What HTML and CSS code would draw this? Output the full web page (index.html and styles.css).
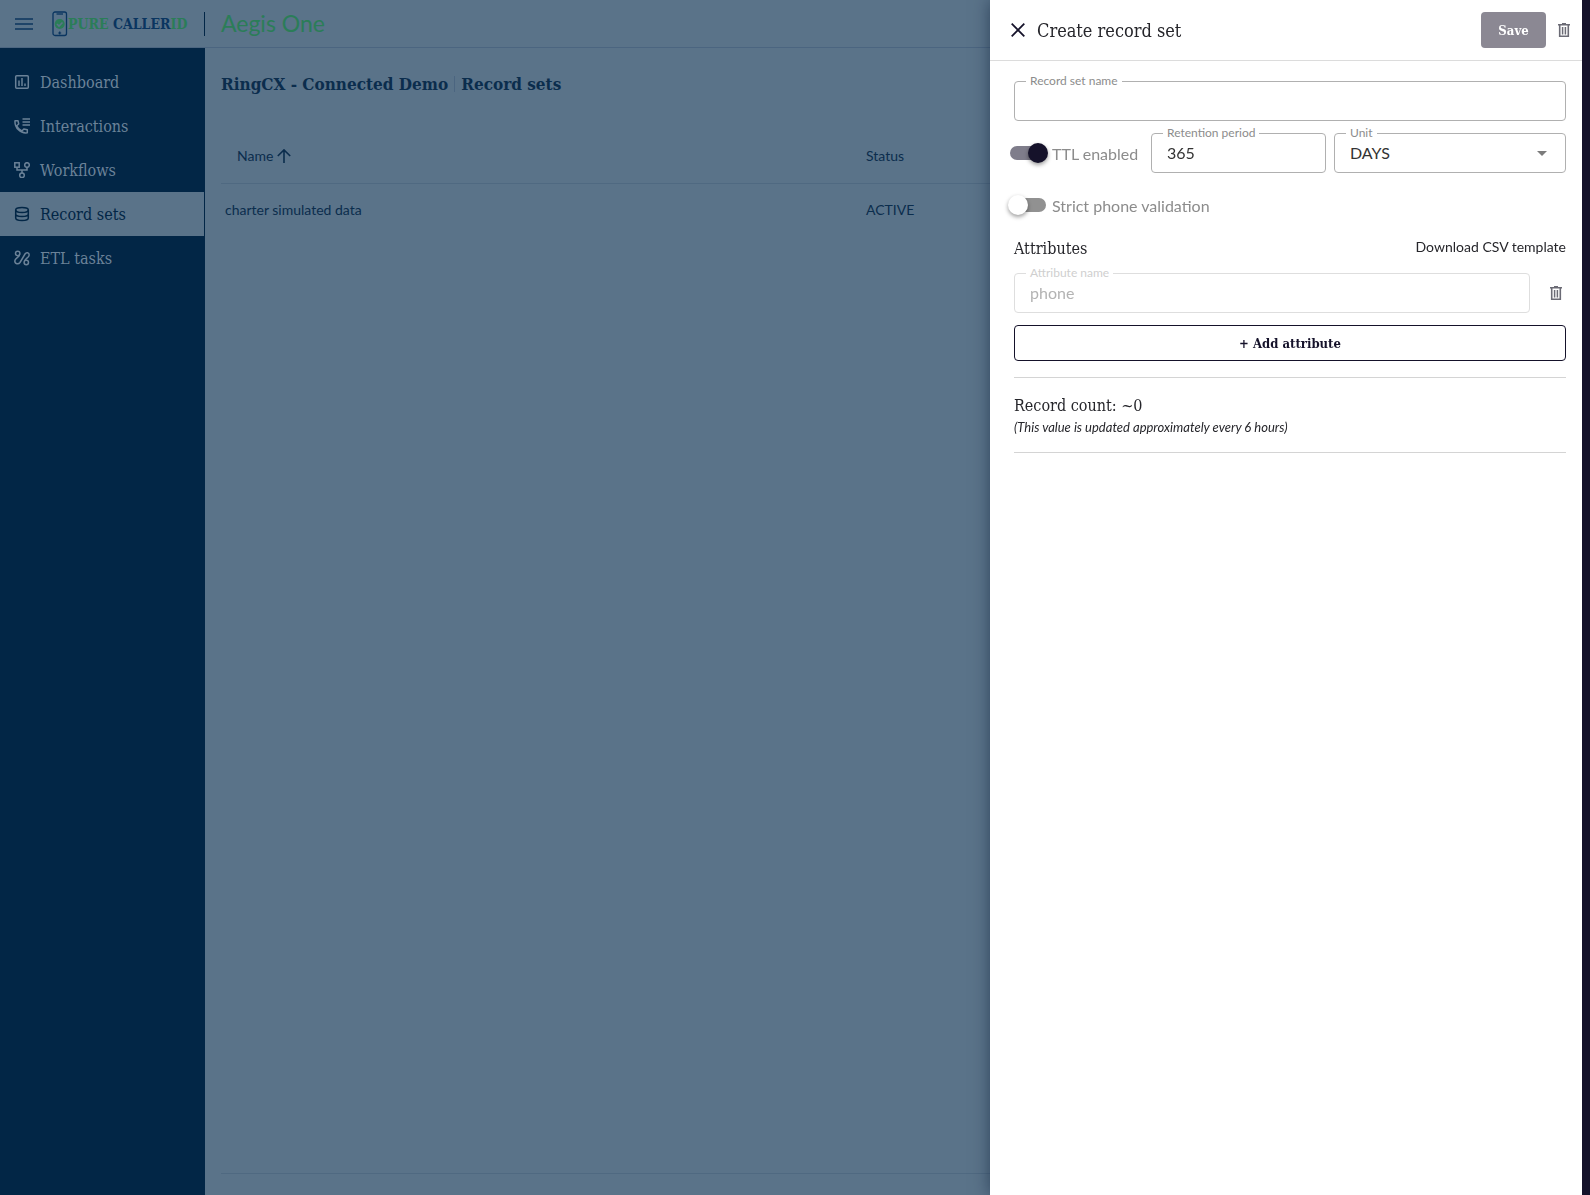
FILE: index.html
```html
<!DOCTYPE html>
<html lang="en">
<head>
    <meta charset="UTF-8">
    <meta name="viewport" content="width=device-width, initial-scale=1.0">
    <title>Aegis One - Record sets</title>
    <link rel="stylesheet" href="styles.css">
</head>
<body>
    <div class="app">
        <header class="topbar">
            <button class="icon-btn menu-btn" aria-label="Menu">
                <svg width="18" height="12" viewBox="0 0 18 12"><path d="M0 0h18v2H0zM0 5h18v2H0zM0 10h18v2H0z" fill="currentColor"/></svg>
            </button>
            <a class="logo" href="#">
                <svg width="16" height="26" viewBox="0 0 16 26">
                    <rect x="1" y="1" width="13.500" height="23.500" rx="2" fill="none" stroke="#0a3560" stroke-width="1.300"/>
                    <path d="M4.500 3h6.500" stroke="#0a3560" stroke-width="1.300"/>
                    <path d="M6.200 22h3M7.700 20.500v3" stroke="#0a3560" stroke-width="1.200"/>
                    <circle cx="7.700" cy="13" r="5" fill="#2b7d58"/>
                    <path d="M5 13l2 2 3.500-3.500" fill="none" stroke="#5a7389" stroke-width="1.600"/>
                </svg>
                <span class="logo-text"><span class="green">PURE</span> CALLER<span class="green">ID</span></span>
            </a>
            <span class="product">Aegis One</span>
        </header>
        <div class="body">
            <nav class="sidebar">
                <a class="nav-item" href="#">
                    <svg width="16" height="16" viewBox="0 0 16 16"><g fill="none" stroke="currentColor" stroke-width="1.500"><rect x="1.700" y="1.700" width="12.600" height="12.600" rx="1"/><path d="M5 6.500v5.500M8 4v8M11 9.500v2.500"/></g></svg>
                    Dashboard
                </a>
                <a class="nav-item" href="#">
                    <svg width="16" height="16" viewBox="0 0 16 16"><path d="M8.500 1h7.500M8.500 4h7.500M8.500 7h7.500" stroke="currentColor" stroke-width="1.500"/><path d="M1 2.700h3l.7 3.300-2 1.700c1 2.300 2.800 4.200 5.200 5.300l1.900-2 3.500.8v3C6.500 15.800.5 9.800 1 2.700z" fill="none" stroke="currentColor" stroke-width="1.500" stroke-linejoin="round"/></svg>
                    Interactions
                </a>
                <a class="nav-item" href="#">
                    <svg width="16" height="16" viewBox="0 0 16 16"><g fill="none" stroke="currentColor" stroke-width="1.500"><rect x=".8" y=".8" width="4.400" height="4.400"/><circle cx="13" cy="3" r="2.300"/><circle cx="8" cy="13.300" r="2.300"/><path d="M3 5v3h10V5M8 8v3"/></g></svg>
                    Workflows
                </a>
                <a class="nav-item active" href="#">
                    <svg width="16" height="16" viewBox="0 0 16 16"><g fill="none" stroke="currentColor" stroke-width="1.500"><ellipse cx="8" cy="4" rx="6.300" ry="2.500"/><path d="M1.700 4v8c0 1.400 2.800 2.500 6.300 2.500s6.300-1.100 6.300-2.500V4M1.700 8c0 1.400 2.800 2.500 6.300 2.500s6.300-1.100 6.300-2.500"/></g></svg>
                    Record sets
                </a>
                <a class="nav-item" href="#">
                    <svg width="16" height="16" viewBox="0 0 16 16"><g fill="none" stroke="currentColor" stroke-width="1.500"><circle cx="3.700" cy="3.500" r="2.200"/><circle cx="12.300" cy="12.500" r="2.200"/><path d="M5.500 4.800C5.500 7.500.8 8 .8 11c0 3.200 3.600 3.700 5.200 1.500l5-8.500c1.300-2 4.200-1.500 4.200 1 0 2.700-4.200 3.500-4.400 6"/></g></svg>
                    ETL tasks
                </a>
            </nav>
            <main class="content">
                <h1 class="page-title"><span>RingCX - Connected Demo</span><span class="title-sep"></span><span>Record sets</span></h1>
                <table class="records">
                    <thead>
                        <tr>
                            <th class="col-name">Name <svg width="14" height="14" viewBox="0 0 14 14"><path d="M7 14V1M.8 7L7 .9 13.200 7" fill="none" stroke="currentColor" stroke-width="1.600"/></svg></th>
                            <th>Status</th>
                        </tr>
                    </thead>
                    <tbody>
                        <tr>
                            <td>charter simulated data</td>
                            <td>ACTIVE</td>
                        </tr>
                    </tbody>
                </table>
                <footer class="table-footer"></footer>
            </main>
        </div>
    </div>

    <form class="drawer">
        <div class="drawer-header">
            <button type="button" class="icon-btn close-btn" aria-label="Close">
                <svg width="14" height="14" viewBox="0 0 14 14"><path d="M.7.7l12.600 12.600M13.300.7L.7 13.300" stroke="currentColor" stroke-width="1.800"/></svg>
            </button>
            <h2 class="drawer-title">Create record set</h2>
            <button class="save-btn" disabled>Save</button>
            <button type="button" class="icon-btn" aria-label="Delete record set">
                <svg width="12" height="15" viewBox="0 0 12 15"><path d="M0 1.700h12M4 .7h4" stroke="currentColor" stroke-width="1.400"/><path d="M1.700 2v11.300h8.600V2" fill="none" stroke="currentColor" stroke-width="1.600"/><path d="M4.600 4v7.500M7.400 4v7.500" stroke="currentColor" stroke-width="1.500"/></svg>
            </button>
        </div>
        <div class="drawer-body">
            <div class="field">
                <label for="setName">Record set name</label>
                <input type="text" id="setName">
            </div>
            <div class="row">
                <label class="switch"><input type="checkbox" checked>TTL enabled</label>
                <div class="field period">
                    <label for="period">Retention period</label>
                    <input type="text" id="period" value="365">
                </div>
                <div class="field unit">
                    <label for="unit">Unit</label>
                    <select id="unit">
                        <option>DAYS</option>
                    </select>
                    <svg class="caret" width="10" height="5" viewBox="0 0 10 5"><path d="M0 0h10L5 5z" fill="currentColor"/></svg>
                </div>
            </div>
            <div class="row">
                <label class="switch"><input type="checkbox">Strict phone validation</label>
            </div>
            <div class="section-head">
                <h3>Attributes</h3>
                <a href="#">Download CSV template</a>
            </div>
            <div class="row attribute">
                <div class="field disabled">
                    <label for="attrName">Attribute name</label>
                    <input type="text" id="attrName" value="phone" disabled>
                </div>
                <button type="button" class="icon-btn" aria-label="Delete attribute">
                    <svg width="12" height="15" viewBox="0 0 12 15"><path d="M0 1.700h12M4 .7h4" stroke="currentColor" stroke-width="1.400"/><path d="M1.700 2v11.300h8.600V2" fill="none" stroke="currentColor" stroke-width="1.600"/><path d="M4.600 4v7.500M7.400 4v7.500" stroke="currentColor" stroke-width="1.500"/></svg>
                </button>
            </div>
            <button type="button" class="add-btn">+ Add attribute</button>
            <div class="count">
                <h3>Record count: ~0</h3>
                <p>(This value is updated approximately every 6 hours)</p>
            </div>
        </div>
    </form>
</body>
</html>
```
FILE: styles.css
```css
* {
    box-sizing: border-box;
}
body {
    margin: 0;
    font-family: Lato, sans-serif;
    font-size: 14px;
    color: #0b2d4d;
    background: #5a7389;
}
h1, h2, h3, p {
    margin: 0;
    font-weight: normal;
}
a {
    color: inherit;
    text-decoration: none;
}
svg {
    display: block;
    flex: none;
}
.app {
    display: flex;
    flex-direction: column;
    height: 100vh;
    overflow: hidden;
}
.icon-btn {
    display: flex;
    padding: 0;
    border: none;
    background: none;
    color: #6b6b75;
    cursor: pointer;
}

/* top bar */
.topbar {
    display: flex;
    align-items: center;
    height: 48px;
    padding-left: 15px;
    border-bottom: 1px solid #4b6580;
}
.menu-btn {
    color: #1f4468;
}
.logo {
    display: flex;
    align-items: center;
    width: 153px;
    height: 24px;
    margin-left: 19px;
    border-right: 1px solid #022646;
    white-space: nowrap;
}
.logo-text {
    font: bold 14px "DejaVu Serif Condensed", "DejaVu Serif", serif;
    color: #0a3560;
}
.green, .product {
    color: #2b7d58;
}
.product {
    margin-left: 16px;
    font-size: 23px;
    line-height: 24px;
    padding-bottom: 2px;
}

/* side menu */
.body {
    display: flex;
    flex: 1;
}
.sidebar {
    width: 205px;
    padding: 12px 1px 0 0;
    background: #022646;
}
.nav-item {
    display: flex;
    align-items: center;
    gap: 10px;
    height: 44px;
    padding-left: 14px;
    font: 16px "DejaVu Serif Condensed", "DejaVu Serif", serif;
    color: #6b8298;
}
.nav-item.active {
    background: #5a7389;
    color: #022646;
}

/* records */
.content {
    display: flex;
    flex-direction: column;
    flex: 1;
    padding-left: 16px;
}
.page-title {
    display: flex;
    align-items: center;
    height: 72px;
    font: bold 17px "DejaVu Serif Condensed", "DejaVu Serif", serif;
}
.title-sep {
    width: 1px;
    height: 16px;
    margin: 0 6px;
    background: #4b6580;
}
.records {
    width: 100%;
    margin-top: 8px;
    border-collapse: collapse;
    table-layout: fixed;
}
.records th {
    height: 55px;
    padding: 0;
    border-bottom: 1px solid #4f6981;
    text-align: left;
    font-weight: normal;
}
.records th svg {
    display: inline-block;
    vertical-align: -2px;
}
.records .col-name {
    width: 645px;
    padding-left: 16px;
}
.records td {
    height: 52px;
    padding: 0;
}
.records td:first-child {
    padding-left: 4px;
}
.table-footer {
    height: 22px;
    margin-top: auto;
    border-top: 1px solid #4f6981;
}

/* drawer */
.drawer {
    position: fixed;
    top: 0;
    right: 0;
    bottom: 0;
    width: 600px;
    border-right: 8px solid #15122a;
    background: #fff;
    box-shadow: 0 0 16px rgba(2, 20, 45, 0.5);
    color: #26262b;
}
.drawer-header {
    display: flex;
    align-items: center;
    gap: 12px;
    height: 61px;
    padding: 0 12px 0 21px;
    border-bottom: 1px solid #dcdcdc;
}
.close-btn {
    color: #15122a;
}
.drawer-title {
    flex: 1;
    font: 18px "DejaVu Serif Condensed", "DejaVu Serif", serif;
}
.save-btn {
    width: 65px;
    height: 36px;
    border: none;
    border-radius: 4px;
    background: #8b8893;
    color: #fff;
    font: bold 13px "DejaVu Serif Condensed", "DejaVu Serif", serif;
}
.drawer-body {
    display: flex;
    flex-direction: column;
    gap: 12px;
    padding: 20px 16px 0 24px;
}
.row {
    display: flex;
    align-items: center;
    gap: 8px;
    min-height: 40px;
}
.field {
    position: relative;
    flex: 1;
}
.field label {
    position: absolute;
    top: -8px;
    left: 12px;
    padding: 0 4px;
    background: #fff;
    color: #8c8c8c;
    font-size: 12px;
    line-height: 16px;
}
.field input, .field select {
    display: block;
    width: 100%;
    height: 40px;
    padding: 0 15px 2px;
    border: 1px solid #b0b0b0;
    border-radius: 4px;
    background: #fff;
    color: #333;
    font: 16px Lato, sans-serif;
    appearance: none;
}
.field.disabled label {
    color: #cfcfcf;
}
.field.disabled input {
    border-color: #dedede;
    color: #b3b3b3;
}
.period {
    flex: 175 0 0;
}
.unit {
    flex: 232 0 0;
}
.caret {
    position: absolute;
    top: 18px;
    right: 19px;
    color: #7c7c7c;
    pointer-events: none;
}
.switch {
    display: flex;
    align-items: center;
    gap: 6px;
    width: 133px;
    margin-left: -4px;
    font-size: 16px;
    color: #8c8c8c;
    white-space: nowrap;
}
.switch input {
    position: relative;
    flex: none;
    width: 36px;
    height: 14px;
    margin: 0;
    border-radius: 7px;
    background: #919191;
    appearance: none;
}
.switch input::before {
    content: "";
    position: absolute;
    top: -3px;
    left: -2px;
    width: 20px;
    height: 20px;
    border-radius: 50%;
    background: #fff;
    box-shadow: 0 2px 4px rgba(0, 0, 0, 0.4);
}
.switch input:checked {
    background: #7f7d8b;
}
.switch input:checked::before {
    left: 18px;
    background: #15122a;
}
.section-head {
    display: flex;
    justify-content: space-between;
    height: 24px;
    line-height: 20px;
}
.drawer-body h3 {
    font: 16px/24px "DejaVu Serif Condensed", "DejaVu Serif", serif;
}
.attribute .icon-btn {
    margin: 0 4px 0 12px;
}
.add-btn {
    height: 36px;
    border: 1px solid #15122a;
    border-radius: 4px;
    background: #fff;
    color: #15122a;
    font: bold 13px "DejaVu Serif Condensed", "DejaVu Serif", serif;
}
.count {
    height: 76px;
    margin-top: 4px;
    padding-top: 16px;
    border: 1px solid #d4d4d4;
    border-width: 1px 0;
}
.count p {
    font-size: 13px;
    line-height: 18px;
    font-style: italic;
}
```
